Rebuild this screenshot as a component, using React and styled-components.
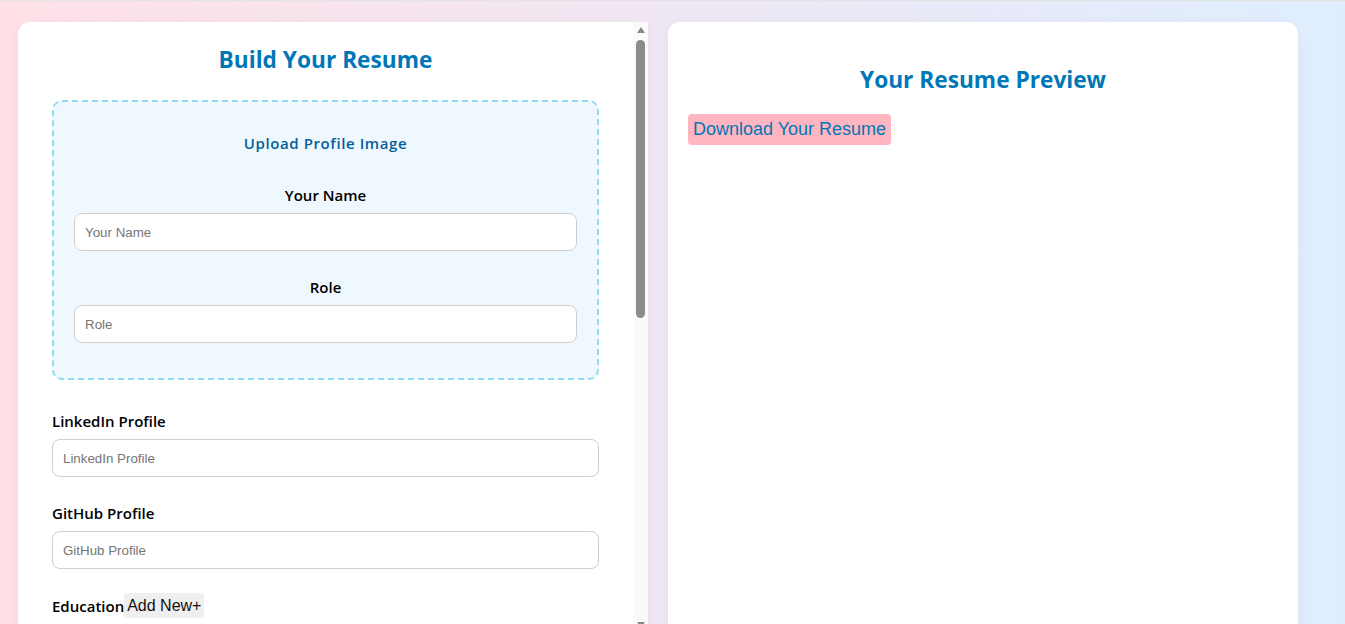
import React from "react";
import styled, { createGlobalStyle } from "styled-components";

const GlobalStyle = createGlobalStyle`
  html, body {
    margin: 0;
    padding: 0;
    height: 100%;
    overflow: hidden;
  }
  body {
    font-family: "Open Sans", "Noto Sans", sans-serif;
    border-top: 1px solid #e4e4e4;
    box-sizing: border-box;
  }
  * {
    box-sizing: border-box;
  }
`;

const Page = styled.div`
  min-height: 100vh;
  background: linear-gradient(to right, #ffe0e7, #dfeeff);
  display: grid;
  grid-template-columns: 630px 630px;
  gap: 20px;
  padding: 21px 47px 0 18px;
`;

const FormPanel = styled.div`
  display: flex;
  background: #fff;
  border-radius: 12px 0 0 12px;
  height: 610px;
  overflow: hidden;
  box-shadow: 0 4px 14px rgba(0, 0, 0, 0.05);
`;

const FormScroll = styled.div`
  flex: 1;
  overflow-y: auto;
  padding: 0 34px 60px;
  scrollbar-width: none;
  &::-webkit-scrollbar {
    display: none;
  }
`;

const ScrollTrack = styled.div`
  width: 15px;
  flex-shrink: 0;
  background: #fafafa;
  display: flex;
  flex-direction: column;
  align-items: center;
`;

const Arrow = styled.div`
  width: 0;
  height: 0;
  border-left: 4.5px solid transparent;
  border-right: 4.5px solid transparent;
  ${({ $down }) =>
    $down
      ? "border-top: 6px solid #8b8b8b; margin-top: auto; margin-bottom: 4px;"
      : "border-bottom: 6px solid #8b8b8b; margin-top: 5px;"}
`;

const Thumb = styled.div`
  width: 9px;
  height: 278px;
  margin-top: 7px;
  border-radius: 5px;
  background: #8b8b8b;
`;

const PreviewPanel = styled.div`
  background: #fff;
  border-radius: 12px;
  height: 640px;
  padding: 20px;
  box-shadow: 0 4px 14px rgba(0, 0, 0, 0.05);
`;

const Title = styled.h2`
  color: #0077b6;
  font-size: 22.7px;
  font-weight: 700;
  line-height: 32px;
  text-align: center;
  margin: ${({ $form }) => ($form ? "22px 0 24px" : "22px 0 18px")};
`;

const UploadBox = styled.div`
  background: #f0f8ff;
  border: 2px dashed #90dbef;
  border-radius: 10px;
  padding: 20px 20px 35px;
  margin-bottom: 31px;
`;

const UploadLabel = styled.label`
  display: block;
  text-align: center;
  color: #035f99;
  font-size: 15px;
  font-weight: 600;
  letter-spacing: 0.6px;
  line-height: 22px;
  padding: 10px 0;
  margin-bottom: 21px;
  cursor: pointer;
`;

const Field = styled.div`
  display: flex;
  flex-direction: column;
  margin-bottom: ${({ $last }) => ($last ? "0" : "26px")};
`;

const Label = styled.label`
  display: block;
  font-size: 15px;
  font-weight: 600;
  line-height: 20px;
  color: #000;
  margin-bottom: 8px;
  text-align: ${({ $center }) => ($center ? "center" : "left")};
`;

const Input = styled.input`
  height: 38px;
  width: 100%;
  border: 1px solid #cfcfcf;
  border-radius: 8px;
  padding: 0 10px;
  font-family: "Liberation Sans", Arial, sans-serif;
  font-size: 13.333px;
  background: #fff;
  outline: none;
  &::placeholder {
    color: #767676;
  }
`;

const TextArea = styled.textarea`
  height: 90px;
  width: 100%;
  border: 1px solid #cfcfcf;
  border-radius: 8px;
  padding: 10px;
  font-family: "Liberation Sans", Arial, sans-serif;
  font-size: 13.333px;
  resize: none;
  &::placeholder {
    color: #767676;
  }
`;

const SectionHead = styled.div`
  display: flex;
  align-items: center;
  font-size: 15px;
  font-weight: 600;
  line-height: 20px;
  margin: -2px 0 26px;
`;

const AddButton = styled.button`
  font-family: "Liberation Sans", Arial, sans-serif;
  font-size: 16px;
  color: #111;
  background: #efefef;
  border: none;
  border-radius: 4px;
  height: 25px;
  padding: 0 3px;
  margin-left: 0;
  cursor: pointer;
`;

const DownloadButton = styled.button`
  font-family: "Liberation Sans", Arial, sans-serif;
  font-size: 18px;
  color: #0077b6;
  background: #ffb6c1;
  border: none;
  border-radius: 4px;
  height: 31px;
  padding: 0 5px;
  cursor: pointer;
`;

const TextField = ({ label, center, last }) => (
  <Field $last={last}>
    <Label $center={center}>{label}</Label>
    <Input placeholder={label} />
  </Field>
);

export default function App() {
  return (
    <>
      <GlobalStyle />
      <Page>
        <FormPanel>
          <FormScroll>
            <Title $form>Build Your Resume</Title>
            <UploadBox>
              <UploadLabel>Upload Profile Image</UploadLabel>
              <TextField label="Your Name" center />
              <TextField label="Role" center last />
            </UploadBox>
            <TextField label="LinkedIn Profile" />
            <TextField label="GitHub Profile" />
            <SectionHead>
              Education<AddButton>Add New+</AddButton>
            </SectionHead>
            <SectionHead>
              Experience<AddButton>Add New+</AddButton>
            </SectionHead>
            <SectionHead>
              Projects<AddButton>Add New+</AddButton>
            </SectionHead>
            <Field>
              <Label>Skills</Label>
              <TextArea placeholder="Skills (comma separated)" />
            </Field>
            <Field>
              <Label>Summary</Label>
              <TextArea placeholder="Summary" />
            </Field>
          </FormScroll>
          <ScrollTrack>
            <Arrow />
            <Thumb />
            <Arrow $down />
          </ScrollTrack>
        </FormPanel>
        <PreviewPanel>
          <Title>Your Resume Preview</Title>
          <DownloadButton>Download Your Resume</DownloadButton>
        </PreviewPanel>
      </Page>
    </>
  );
}
